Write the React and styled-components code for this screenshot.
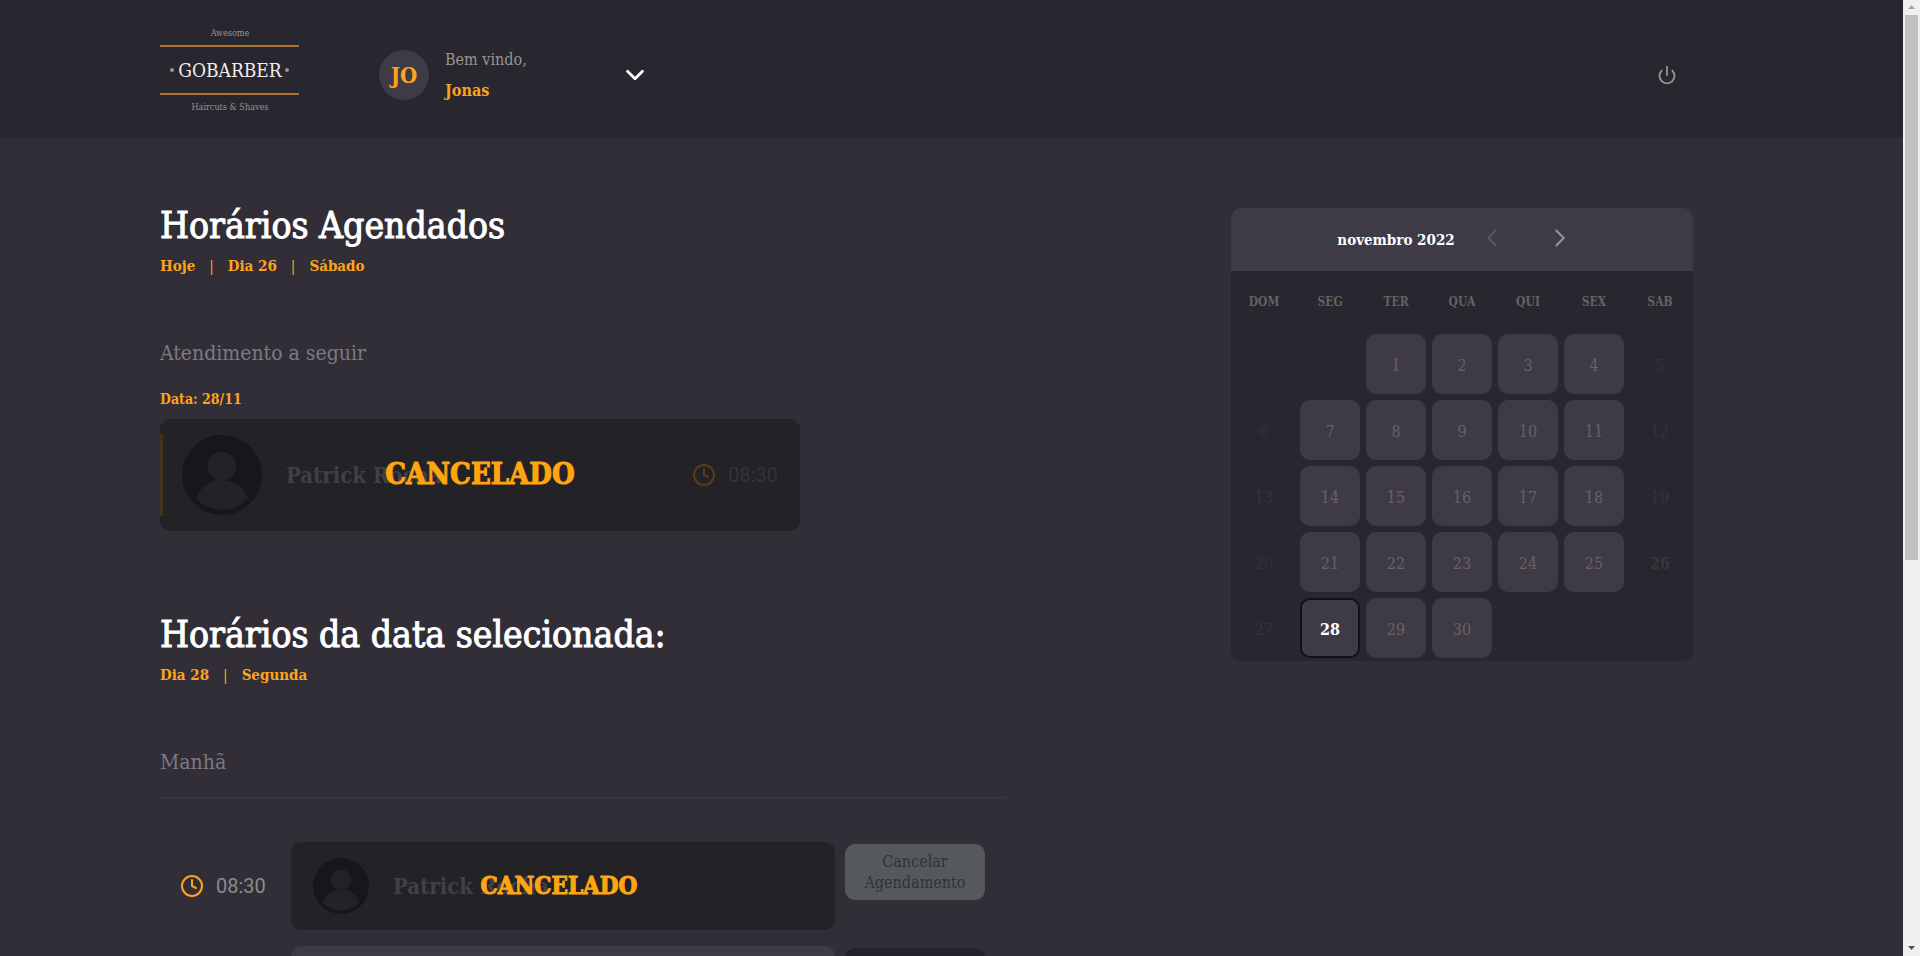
import React from "react";
import styled, { createGlobalStyle, css } from "styled-components";
import { FiChevronDown, FiChevronLeft, FiChevronRight, FiClock, FiPower } from "react-icons/fi";

const serif = '"Roboto Slab", "DejaVu Serif Condensed", "DejaVu Serif", serif';

const GlobalStyle = createGlobalStyle`
  * { box-sizing: border-box; margin: 0; padding: 0; }
  body { background: #312e38; color: #fff; font-family: ${serif}; font-size: 16px; }
  button { border: 0; background: none; cursor: pointer; font-family: inherit; }
`;

const Shell = styled.div`
  display: flex;
  height: 100vh;
  overflow: hidden;
`;

const Page = styled.div`
  flex: 1;
  min-width: 0;
  overflow-y: auto;
  scrollbar-width: none;
`;

const Header = styled.header`
  padding: 24px 160px;
  background: #28262e;
`;

const HeaderContent = styled.div`
  display: flex;
  align-items: flex-end;
  height: 90px;
`;

const Logo = styled.svg`
  width: 140px;
  height: 90px;
`;

const Profile = styled.div`
  display: flex;
  align-items: center;
  height: 78px;
  margin-left: 79px;
`;

const Initials = styled.div`
  display: grid;
  place-items: center;
  width: 50px;
  height: 50px;
  border-radius: 50%;
  background: #3e3b47;
  color: #ffa31a;
  font-size: 22px;
  font-weight: 700;
`;

const Welcome = styled.div`
  display: flex;
  flex-direction: column;
  width: 175px;
  margin-left: 16px;
  line-height: 31px;
  color: #999591;

  a {
    color: #ffa31a;
    font-weight: 700;
    text-decoration: none;
  }
`;

const IconButton = styled.button`
  display: grid;
  place-items: center;
  color: ${(p) => p.$color || "#999591"};
`;

const SignOut = styled(IconButton)`
  height: 78px;
  margin-left: auto;
  margin-right: 66px;
`;

const Content = styled.main`
  display: flex;
  justify-content: space-between;
  align-items: flex-start;
  padding: 64px 210px 24px 160px;
`;

const Schedule = styled.div`
  width: 846px;
`;

const Title = styled.h1`
  font-size: 37px;
  line-height: 48px;
  font-weight: 400;
  -webkit-text-stroke: 1px currentColor;
`;

const DateLine = styled.p`
  display: flex;
  line-height: 32px;
  font-weight: 700;
  font-size: 15px;
  color: #ffa31a;

  span + span::before {
    content: "|";
    margin: 0 14px;
    font-weight: 400;
  }
`;

const Block = styled.section`
  margin-top: ${(p) => p.$gap};
`;

const Label = styled.h2`
  font-size: 21px;
  line-height: 30px;
  font-weight: 400;
  color: #7d7a80;
  padding-bottom: ${(p) => (p.$rule ? "20px" : "0")};
  border-bottom: ${(p) => (p.$rule ? "1px solid #3e3b47" : "0")};
`;

const NextDate = styled.p`
  margin-top: 20px;
  font-size: 14px;
  line-height: 22px;
  font-weight: 700;
  color: #ffa31a;
`;

const cardSizes = {
  large: css`
    width: 640px;
    height: 112px;
    margin-top: 9px;
  `,
  small: css`
    flex: 1;
    height: 88px;
  `,
};

const Card = styled.article`
  position: relative;
  display: flex;
  align-items: center;
  padding: 16px 22px;
  border-radius: 10px;
  background: ${(p) => (p.$canceled ? "#232227" : "#3e3b47")};
  ${(p) => cardSizes[p.$size]}
`;

const Accent = styled.span`
  width: 3px;
  height: 82px;
  margin: 0 19px 0 -22px;
  background: #43331d;
`;

const Avatar = styled.svg`
  width: ${(p) => p.$size};
  height: ${(p) => p.$size};
  border-radius: 50%;
`;

const ClientName = styled.strong`
  margin-left: 24px;
  font-size: 22px;
  color: #414044;
`;

const CardTime = styled.span`
  display: flex;
  align-items: center;
  gap: 12px;
  margin-left: auto;
  font-family: Roboto, sans-serif;
  font-size: 20px;
  color: #343338;

  svg { color: #573d18; }
`;

const Canceled = styled.span`
  position: absolute;
  inset: ${(p) => (p.$large ? "0" : "0 8px 0 0")};
  padding-bottom: 2px;
  display: grid;
  place-items: center;
  font-size: ${(p) => (p.$large ? "29px" : "24px")};
  font-weight: 700;
  color: #ffa50f;
  -webkit-text-stroke: 1px currentColor;
`;

const Slots = styled.ul`
  display: grid;
  gap: 16px;
  margin-top: 44px;
  list-style: none;
`;

const Slot = styled.li`
  display: flex;
  align-items: flex-start;
  padding-right: 21px;
`;

const SlotTime = styled.span`
  display: flex;
  align-items: center;
  gap: 12px;
  width: 131px;
  height: 88px;
  padding-left: 20px;
  font-family: Roboto, sans-serif;
  font-size: 20px;
  color: #8c898d;

  svg { color: #ffa31a; }
`;

const CancelButton = styled.button`
  && {
    width: 140px;
    height: 56px;
    margin: 2px 0 0 10px;
    border-radius: 10px;
    background: ${(p) => (p.$muted ? "#56595c" : "#232129")};
    color: #323136;
    font-size: 16px;
    line-height: 21px;
  }
`;

const Calendar = styled.aside`
  width: 462px;
  margin-top: 6px;
  border-radius: 10px;
  overflow: hidden;
  background: #28262e;
`;

const CalendarHead = styled.div`
  display: flex;
  align-items: center;
  justify-content: center;
  height: 63px;
  padding-right: 12px;
  background: #3e3b47;

  strong { margin-right: 22px; font-size: 15px; }
  button { padding-bottom: 4px; }
  button + button { margin-left: 38px; }
`;

const Month = styled.table`
  width: 100%;
  table-layout: fixed;
  border-collapse: collapse;
  color: #666360;

  th { height: 60px; padding-top: 2px; font-size: 12px; font-weight: 700; }
  td { height: 66px; padding: 3px; }
`;

const dayLook = {
  open: css`
    background: #3e3b47;
    color: #666360;
  `,
  off: css`
    color: #353339;
  `,
  today: css`
    color: #39373d;
    font-weight: 700;
  `,
  selected: css`
    background: #3e3b47;
    color: #fff;
    font-weight: 700;
    border: 2px solid #121116;
  `,
};

const Day = styled.button`
  && {
    display: block;
    width: 100%;
    height: 60px;
    padding-top: 2px;
    border-radius: 10px;
    font-size: 16px;
    ${(p) => dayLook[p.$look]}
  }
`;

const Scrollbar = styled.div`
  display: flex;
  flex-direction: column;
  align-items: center;
  width: 17px;
  background: #f0f0f0;
`;

const ScrollThumb = styled.div`
  flex: 0 0 57%;
  width: 13px;
  margin-bottom: auto;
  background: #c1c1c1;
`;

const Arrow = styled.svg`
  width: 17px;
  height: 15px;
`;

const Person = ({ size }) => (
  <Avatar $size={size} viewBox="0 0 80 80" aria-hidden="true">
    <rect width="80" height="80" fill="#17161a" />
    <circle cx="40" cy="31" r="14.5" fill="#232227" />
    <path d="M14 63 C18 52 28 45 40 45 C52 45 62 52 66 63 C60 71 50 75 40 75 C30 75 20 71 14 63Z" fill="#232227" />
  </Avatar>
);

const BrandLogo = () => (
  <Logo viewBox="0 0 140 90" role="img" aria-label="GoBarber">
    <g fill="#999591" fontFamily={serif} fontSize="9" textAnchor="middle">
      <text x="70" y="12">Awesome</text>
      <text x="70" y="86">Haircuts &amp; Shaves</text>
    </g>
    <path d="M0 22H139M0 70H139" stroke="#a87228" strokeWidth="2" />
    <circle cx="12" cy="46" r="2" fill="#999591" />
    <circle cx="127" cy="46" r="2" fill="#999591" />
    <text x="70" y="53" fill="#f4ede8" fontFamily={serif} fontSize="19" textAnchor="middle">
      GOBARBER
    </text>
  </Logo>
);

const weekdays = ["DOM", "SEG", "TER", "QUA", "QUI", "SEX", "SAB"];
const weeks = Array.from({ length: 5 }, (_, w) =>
  Array.from({ length: 7 }, (_, d) => {
    const day = w * 7 + d - 1;
    return day >= 1 && day <= 30 ? day : null;
  })
);

const lookOf = (day, column) => {
  if (day === 28) return "selected";
  if (day === 26) return "today";
  return column === 0 || column === 6 ? "off" : "open";
};

export default function App() {
  return (
    <Shell>
      <GlobalStyle />
      <Page>
        <Header>
          <HeaderContent>
            <BrandLogo />
            <Profile>
              <Initials>JO</Initials>
              <Welcome>
                <span>Bem vindo,</span>
                <a href="#perfil">Jonas</a>
              </Welcome>
              <IconButton $color="#fff" aria-label="Menu">
                <FiChevronDown size={30} strokeWidth={2.2} />
              </IconButton>
            </Profile>
            <SignOut aria-label="Sair">
              <FiPower size={20} strokeWidth={2.2} />
            </SignOut>
          </HeaderContent>
        </Header>

        <Content>
          <Schedule>
            <Title>Horários Agendados</Title>
            <DateLine>
              <span>Hoje</span>
              <span>Dia 26</span>
              <span>Sábado</span>
            </DateLine>

            <Block $gap="56px">
              <Label>Atendimento a seguir</Label>
              <NextDate>Data: 28/11</NextDate>
              <Card $size="large" $canceled>
                <Accent />
                <Person size="80px" />
                <ClientName>Patrick Rocha</ClientName>
                <CardTime>
                  <FiClock size={24} />
                  08:30
                </CardTime>
                <Canceled $large>CANCELADO</Canceled>
              </Card>
            </Block>

            <Block $gap="80px">
              <Title as="h2">Horários da data selecionada:</Title>
              <DateLine>
                <span>Dia 28</span>
                <span>Segunda</span>
              </DateLine>
            </Block>

            <Block $gap="56px">
              <Label $rule>Manhã</Label>
              <Slots>
                <Slot>
                  <SlotTime>
                    <FiClock size={24} />
                    08:30
                  </SlotTime>
                  <Card $size="small" $canceled>
                    <Person size="56px" />
                    <ClientName>Patrick Rocha</ClientName>
                    <Canceled>CANCELADO</Canceled>
                  </Card>
                  <CancelButton $muted disabled>
                    Cancelar Agendamento
                  </CancelButton>
                </Slot>
                <Slot>
                  <SlotTime />
                  <Card $size="small" />
                  <CancelButton aria-label="Cancelar" />
                </Slot>
              </Slots>
            </Block>
          </Schedule>

          <Calendar>
            <CalendarHead>
              <strong>novembro 2022</strong>
              <IconButton $color="#5a575f" aria-label="Mês anterior" disabled>
                <FiChevronLeft size={30} strokeWidth={1.6} />
              </IconButton>
              <IconButton aria-label="Próximo mês">
                <FiChevronRight size={30} strokeWidth={1.6} />
              </IconButton>
            </CalendarHead>
            <Month>
              <thead>
                <tr>
                  {weekdays.map((name) => (
                    <th key={name} scope="col">{name}</th>
                  ))}
                </tr>
              </thead>
              <tbody>
                {weeks.map((week, w) => (
                  <tr key={w}>
                    {week.map((day, d) => (
                      <td key={d}>{day && <Day $look={lookOf(day, d)}>{day}</Day>}</td>
                    ))}
                  </tr>
                ))}
              </tbody>
            </Month>
          </Calendar>
        </Content>
      </Page>

      <Scrollbar aria-hidden="true">
        <Arrow viewBox="0 0 17 15"><path d="M5 9L8.5 5L12 9Z" fill="#a3a3a3" /></Arrow>
        <ScrollThumb />
        <Arrow viewBox="0 0 17 15"><path d="M5 5L8.5 9L12 5Z" fill="#505050" /></Arrow>
      </Scrollbar>
    </Shell>
  );
}
